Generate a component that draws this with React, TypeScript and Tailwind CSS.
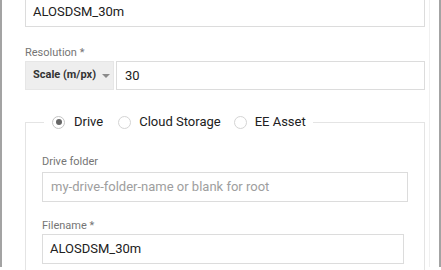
export default function App() {
  return (
    <div className="h-[270px] w-[441px] overflow-hidden bg-white font-['Roboto',sans-serif] text-[#212121]">
      <div className="h-full border-x-2 border-[#a3a3a3] pl-[23px] pr-[9px]">
        <div className="h-full border-r border-[#f0f0f0] pr-[4px]">
          {/* export name */}
          <div className="-mt-[3px] flex h-[30px] items-center border border-[#dcdcdc] pl-[7px] text-[13px]">
            ALOSDSM_30m
          </div>

          {/* resolution */}
          <div className="mt-[18px] text-[11px] leading-4 text-[#757575]">Resolution *</div>
          <div className="flex h-[29px] gap-[2px]">
            <div className="flex w-[89px] shrink-0 items-center whitespace-nowrap border border-[#e6e6e6] bg-[#eeeeee] pl-[7px] text-[11px] font-bold text-[#333333]">
              Scale (m/px)
              <span className="ml-[6px] h-0 w-0 border-x-[4px] border-t-[4px] border-x-transparent border-t-[#8a8a8a]" />
            </div>
            <div className="flex flex-1 items-center border border-[#dcdcdc] pl-[8px] text-[13px]">30</div>
          </div>

          {/* destination */}
          <fieldset className="mt-[21px] border border-[#e4e4e4] px-4 pt-[21px] pb-4">
            <legend className="ml-[2px] flex h-[22px] items-center pl-[8px] pr-[7px] text-[13px]">
              <Radio checked />
              <span className="ml-[9px]">Drive</span>
              <span className="ml-[15px]">
                <Radio />
              </span>
              <span className="ml-[8px]">Cloud Storage</span>
              <span className="ml-[13px]">
                <Radio />
              </span>
              <span className="ml-[8px]">EE Asset</span>
            </legend>

            <div className="mb-[2px] text-[11px] leading-4 text-[#757575]">Drive folder</div>
            <div className="flex h-[30px] items-center border border-[#dcdcdc] pl-[8px] text-[13px] text-[#9e9e9e]">
              my-drive-folder-name or blank for root
            </div>

            <div className="mt-4 text-[11px] leading-4 text-[#757575]">Filename *</div>
            <div className="mr-[4px] flex h-[30px] items-center border border-[#dcdcdc] pl-[7px] text-[13px]">
              ALOSDSM_30m
            </div>
          </fieldset>
        </div>
      </div>
    </div>
  )
}

function Radio({ checked = false }: { checked?: boolean }) {
  return (
    <span
      className={
        checked
          ? "flex h-[13px] w-[13px] items-center justify-center rounded-full border border-[#c4c4c4] bg-white"
          : "flex h-[13px] w-[13px] items-center justify-center rounded-full border border-[#d4d4d4] bg-white"
      }
    >
      {checked && <span className="h-[6px] w-[6px] rounded-full bg-[#666666]" />}
    </span>
  )
}
